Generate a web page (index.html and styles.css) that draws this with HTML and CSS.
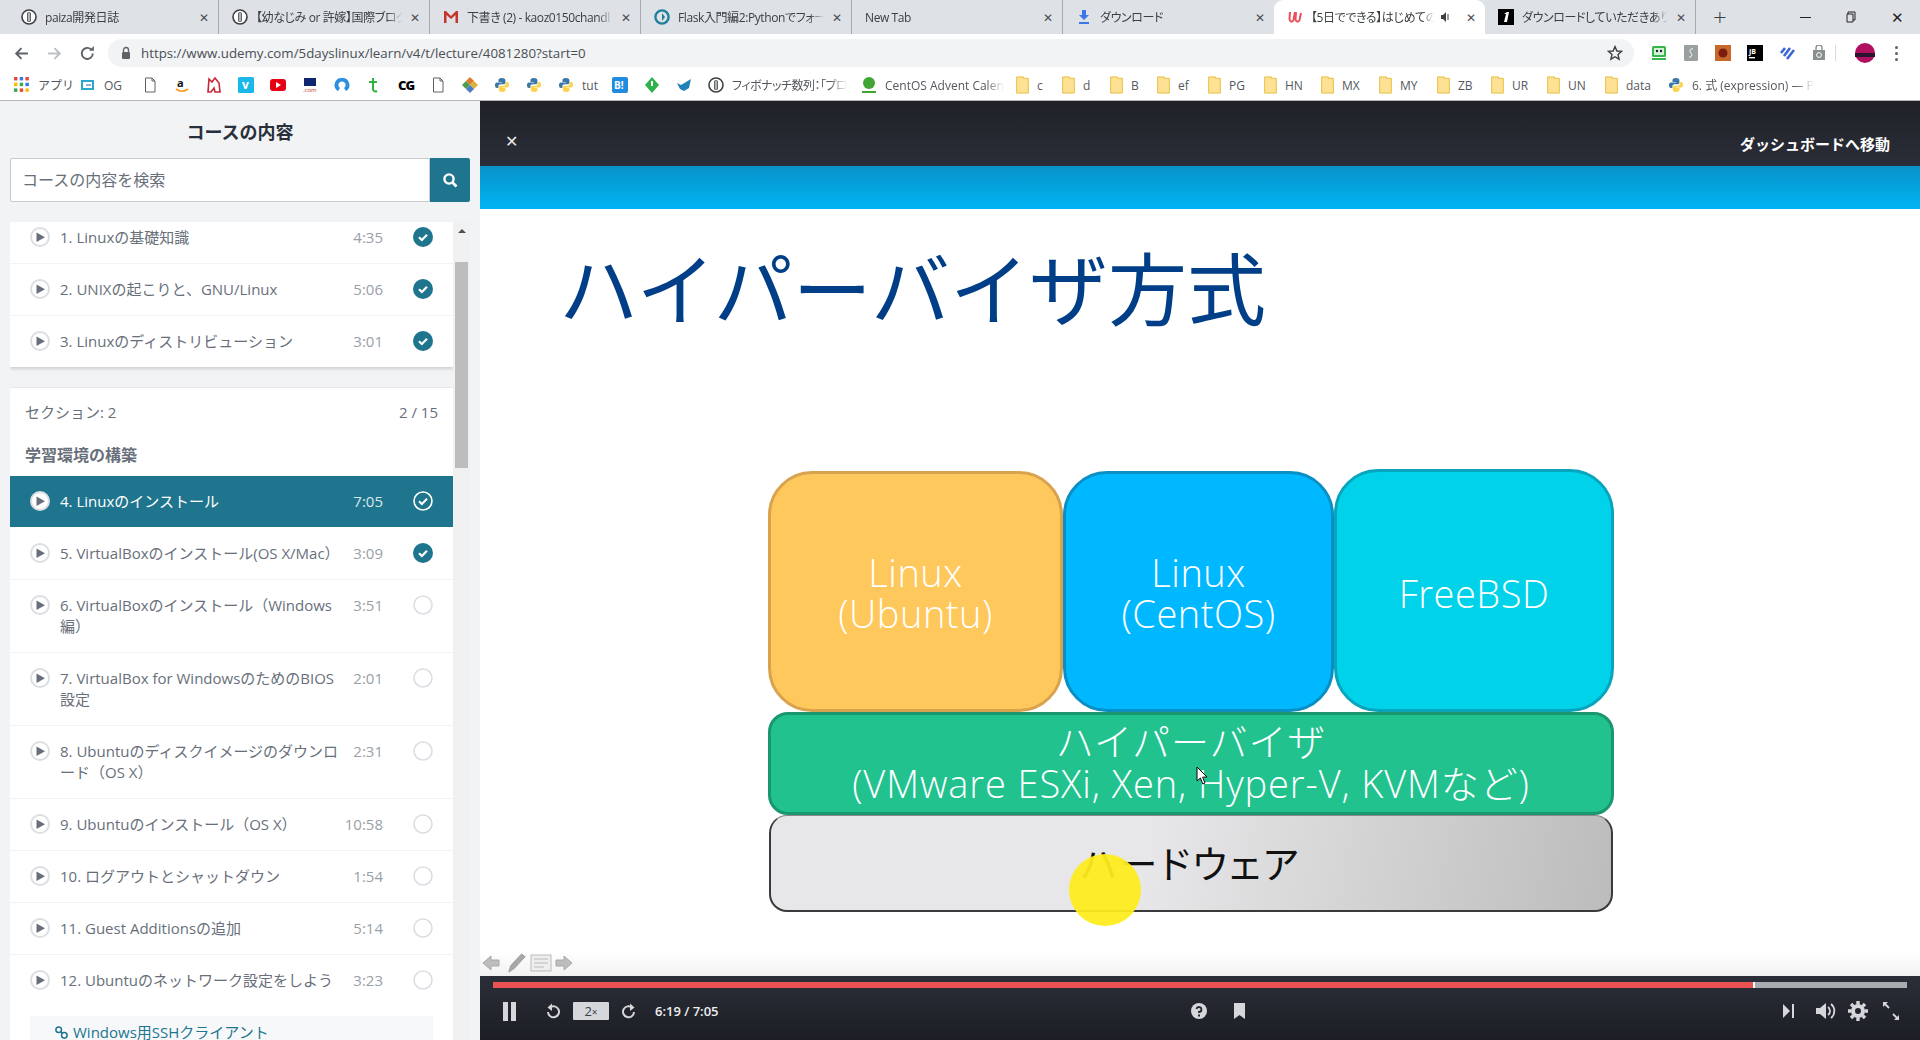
FILE: index.html
```html
<!DOCTYPE html>
<html lang="ja">
<head>
    <meta charset="UTF-8">
    <title>Udemy lecture</title>
    <link rel="stylesheet" href="styles.css">
</head>
<body>
    <svg class="defs" width="0" height="0">
        <symbol id="play" viewBox="0 0 20 20">
            <circle cx="10" cy="10" r="9" fill="#fff" stroke="#dcdee3" stroke-width="2"/>
            <path d="M6.5 5.5 L15 10.3 L6.5 15 Z" fill="#686f7a"/>
        </symbol>
        <symbol id="done" viewBox="0 0 20 20">
            <circle cx="10" cy="10" r="10" fill="#20758e"/>
            <path d="M6 10.2 L8.9 13 L14 7.8" fill="none" stroke="#fff" stroke-width="2.2"/>
        </symbol>
        <symbol id="done-w" viewBox="0 0 20 20">
            <circle cx="10" cy="10" r="9" fill="none" stroke="#fff" stroke-width="1.6"/>
            <path d="M6 10.2 L8.9 13 L14 7.8" fill="none" stroke="#fff" stroke-width="2"/>
        </symbol>
        <symbol id="todo" viewBox="0 0 20 20">
            <circle cx="10" cy="10" r="9" fill="none" stroke="#dcdee3" stroke-width="1.6"/>
        </symbol>
        <symbol id="info" viewBox="0 0 16 16">
            <circle cx="8" cy="8" r="7" fill="#fff" stroke="#3c4043" stroke-width="1.6"/>
            <rect x="6.2" y="3" width="3.6" height="10" rx="1.6" fill="#3c4043"/>
            <rect x="7.4" y="3.6" width="1.2" height="8.8" fill="#fff"/>
        </symbol>
        <symbol id="py" viewBox="0 0 16 16">
            <path d="M8 1 C5 1 4.5 2 4.5 3.2 V5 H8.2 V5.6 H3 C1.6 5.6 1 6.8 1 8.2 C1 9.8 1.6 11 3 11 H4.4 V9.2 C4.4 8 5.4 7.2 6.4 7.2 H9.8 C10.8 7.2 11.4 6.4 11.4 5.4 V3.2 C11.4 1.8 10 1 8 1 Z" fill="#3a77a8"/>
            <path d="M8 15 C11 15 11.5 14 11.5 12.8 V11 H7.8 V10.4 H13 C14.4 10.4 15 9.2 15 7.8 C15 6.2 14.4 5 13 5 H11.8 V6.8 C11.8 8 10.8 8.8 9.8 8.8 H6.4 C5.4 8.8 4.8 9.6 4.8 10.6 V12.8 C4.8 14.2 6 15 8 15 Z" fill="#fcd448"/>
        </symbol>
        <symbol id="folder" viewBox="0 0 14 20">
            <path d="M.5 1 H8 V2.5 H13.5 V19 H.5 Z" fill="#fde293" stroke="#e8b93a"/>
        </symbol>
        <symbol id="doc" viewBox="0 0 16 16">
            <path d="M3.5 1 H10 L13 4 V15 H3.5 Z M10 1 V4 H13" fill="#fff" stroke="#5f6368"/>
        </symbol>
    </svg>

    <div class="tabs">
        <div class="tab"><svg class="fav"><use href="#info"/></svg><span class="tab-name">paiza開発日誌</span><span class="tab-x">✕</span></div>
        <div class="tab"><svg class="fav"><use href="#info"/></svg><span class="tab-name">【幼なじみ or 許嫁】国際ブログ</span><span class="tab-x">✕</span></div>
        <div class="tab"><svg class="fav" viewBox="0 0 16 16"><path d="M1 14 V2 H3 L8 7 L13 2 H15 V14 H12.5 V6 L8 10 L3.5 6 V14 Z" fill="#c5352b"/></svg><span class="tab-name">下書き (2) - kaoz0150chandl</span><span class="tab-x">✕</span></div>
        <div class="tab"><svg class="fav" viewBox="0 0 16 16"><circle cx="8" cy="8" r="6.6" fill="none" stroke="#1f7f9c" stroke-width="2.4"/><path d="M8 4 L11 8 L8 12 Z" fill="#1f7f9c"/></svg><span class="tab-name">Flask入門編2:Pythonでフォー</span><span class="tab-x">✕</span></div>
        <div class="tab"><span class="tab-name">New Tab</span><span class="tab-x">✕</span></div>
        <div class="tab tab-last"><svg class="fav" viewBox="0 0 16 16"><path d="M6 1 H10 V6 H13 L8 11 L3 6 H6 Z M3 13 H13 V15 H3 Z" fill="#3b78e7"/></svg><span class="tab-name">ダウンロード</span><span class="tab-x">✕</span></div>
        <div class="tab tab-active"><svg class="fav" viewBox="0 0 16 16"><path d="M3 3 L2.5 10 C2.5 13 5.5 13.5 6.5 11 L8 3 M9 3 L8.5 10 C8.5 13 11.5 13.5 12.5 11 L14 4" fill="none" stroke="#e8505b" stroke-width="2"/></svg><span class="tab-name">【5日でできる】はじめての L</span><svg class="tab-sound" viewBox="0 0 12 12"><path d="M1 4 H3 L6 1 V11 L3 8 H1 Z" fill="#3c4043"/><path d="M8 3 V9" stroke="#3c4043"/></svg><span class="tab-x">✕</span></div>
        <div class="tab"><svg class="fav" viewBox="0 0 16 16"><rect width="16" height="16" fill="#000"/><path d="M6 13 L8 5 L6 5 L9 3 H11 L9 13 Z" fill="#fff"/></svg><span class="tab-name">ダウンロードしていただきありがと</span><span class="tab-x">✕</span></div>
        <span class="new-tab">+</span>
        <div class="win-btns">
            <span class="win-min"></span>
            <svg class="win-restore" viewBox="0 0 12 12"><path d="M3 3 V1 H10 V9 H8 M2 3 H8 V11 H2 Z" fill="none" stroke="#222"/></svg>
            <span class="win-x">✕</span>
        </div>
    </div>

    <div class="toolbar">
        <svg class="nav-ico" viewBox="0 0 16 16"><path d="M14 8 H3 M8 3 L3 8 L8 13" fill="none" stroke="#5f6368" stroke-width="1.8"/></svg>
        <svg class="nav-ico" viewBox="0 0 16 16"><path d="M2 8 H13 M8 3 L13 8 L8 13" fill="none" stroke="#bcc0c4" stroke-width="1.8"/></svg>
        <svg class="nav-ico" viewBox="0 0 16 16"><path d="M13 8 A5.2 5.2 0 1 1 11.4 4.2" fill="none" stroke="#5f6368" stroke-width="1.8"/><path d="M9.5 5.5 H14 V1 Z" fill="#5f6368"/></svg>
        <div class="omnibox">
            <svg class="lock" viewBox="0 0 10 14"><path d="M2.5 6 V4 A2.5 2.5 0 0 1 7.5 4 V6" fill="none" stroke="#5f6368" stroke-width="1.3"/><rect x="1" y="6" width="8" height="7" rx="1" fill="#5f6368"/></svg>
            <span class="url">https://www.udemy.com/5dayslinux/learn/v4/t/lecture/4081280?start=0</span>
            <svg class="star" viewBox="0 0 16 16"><path d="M8 1.6 L9.9 6 L14.6 6.4 L11 9.5 L12.1 14.2 L8 11.7 L3.9 14.2 L5 9.5 L1.4 6.4 L6.1 6 Z" fill="none" stroke="#3c4043" stroke-width="1.4"/></svg>
        </div>
        <div class="exts">
            <svg class="ext" viewBox="0 0 16 16"><rect x="1" y="1" width="14" height="11" rx="1.5" fill="#36b54a"/><rect x="3" y="3" width="10" height="7" fill="#d4f2d8"/><circle cx="6" cy="6" r="1.2" fill="#222"/><circle cx="10" cy="6" r="1.2" fill="#222"/><rect x="1" y="13" width="14" height="2" fill="#36b54a"/></svg>
            <svg class="ext" viewBox="0 0 16 16"><rect x="1" y="0" width="14" height="16" rx="1" fill="#9aa0a0"/><path d="M10 4 C7 3 6 6 8 8 C10 10 8 13 6 12" fill="none" stroke="#fff"/></svg>
            <svg class="ext" viewBox="0 0 16 16"><rect width="16" height="16" fill="#c8682a"/><circle cx="8" cy="8" r="4.5" fill="#7a1c10"/></svg>
            <svg class="ext" viewBox="0 0 16 16"><rect width="16" height="16" fill="#000"/><text x="2" y="9" class="ext-jb">JB</text><rect x="2" y="12" width="6" height="1.4" fill="#fff"/></svg>
            <svg class="ext" viewBox="0 0 16 16"><path d="M2 8 L6 3 M5 11 L11 3 M8 14 L15 5" stroke="#3b66d8" stroke-width="2.6"/></svg>
            <svg class="ext" viewBox="0 0 16 16"><path d="M2 5 H14 V15 H2 Z" fill="#8a8f90"/><path d="M5 5 V3 A3 3 0 0 1 11 3 V5" fill="none" stroke="#8a8f90" stroke-width="1.4"/><circle cx="8" cy="10" r="2.4" fill="none" stroke="#fff"/></svg>
            <span class="ext-sep"></span>
            <svg class="avatar" viewBox="0 0 20 20"><circle cx="10" cy="10" r="10" fill="#b0105f"/><path d="M0 10 H20 V14 H0 Z" fill="#2a1430"/></svg>
            <span class="kebab"><i></i><i></i><i></i></span>
        </div>
    </div>

    <div class="bookmarks">
        <div class="bm w66"><svg class="bm-ico" viewBox="0 0 14 14"><rect width="3" height="3" fill="#e8453c"/><rect x="5" width="3" height="3" fill="#3b78e7"/><rect x="10" width="3" height="3" fill="#e8453c"/><rect y="5" width="3" height="3" fill="#fbbc05"/><rect x="5" y="5" width="3" height="3" fill="#34a853"/><rect x="10" y="5" width="3" height="3" fill="#3b78e7"/><rect y="10" width="3" height="3" fill="#34a853"/><rect x="5" y="10" width="3" height="3" fill="#e8453c"/><rect x="10" y="10" width="3" height="3" fill="#fbbc05"/></svg><span>アプリ</span></div>
        <div class="bm w62"><svg class="bm-ico" viewBox="0 0 16 16"><rect x="2" y="4" width="11" height="8" fill="none" stroke="#2aa7c9" stroke-width="2"/><rect x="6" y="7" width="5" height="2" fill="#9ad"/></svg><span>OG</span></div>
        <div class="bm"><svg class="bm-ico"><use href="#doc"/></svg></div>
        <div class="bm"><svg class="bm-ico" viewBox="0 0 16 16"><text x="3" y="10" class="ico-a">a</text><path d="M2 12 C6 15 10 15 14 12" fill="none" stroke="#f49b1a" stroke-width="1.6"/></svg></div>
        <div class="bm"><svg class="bm-ico" viewBox="0 0 16 16"><path d="M3 2 L6 5 L9 1 L13 6 L14 15 H9 L8 11 L5 15 H2 Z" fill="#fff" stroke="#c62838" stroke-width="1.6"/></svg></div>
        <div class="bm"><svg class="bm-ico" viewBox="0 0 16 16"><rect width="16" height="16" rx="1.5" fill="#1ab7ea"/><text x="4" y="12" class="ico-w">v</text></svg></div>
        <div class="bm"><svg class="bm-ico" viewBox="0 0 16 16"><rect y="2" width="16" height="12" rx="3" fill="#e60012"/><path d="M6 5 L11 8 L6 11 Z" fill="#fff"/></svg></div>
        <div class="bm"><svg class="bm-ico" viewBox="0 0 16 16"><rect x="2" y="1" width="12" height="8" fill="#11276d"/><text x="1" y="15" class="ico-s">.com</text></svg></div>
        <div class="bm"><svg class="bm-ico" viewBox="0 0 16 16"><path d="M8 1 A7 7 0 0 1 12 14 L10 11 A3.6 3.6 0 1 0 6 11 L4 14 A7 7 0 0 1 8 1 Z" fill="#2d8fe0"/></svg></div>
        <div class="bm"><svg class="bm-ico" viewBox="0 0 16 16"><path d="M7 1 V12 C7 14 9 15 11 14 M3 5 H11" fill="none" stroke="#2fb23f" stroke-width="2"/></svg></div>
        <div class="bm"><span class="ico-cg">CG</span></div>
        <div class="bm"><svg class="bm-ico"><use href="#doc"/></svg></div>
        <div class="bm"><svg class="bm-ico" viewBox="0 0 16 16"><path d="M8 0 L12 4 L8 8 L4 4 Z" fill="#e2792b"/><path d="M4 4 L8 8 L4 12 L0 8 Z" fill="#4a9d4f"/><path d="M12 4 L16 8 L12 12 L8 8 Z" fill="#d9b33a"/><path d="M8 8 L12 12 L8 16 L4 12 Z" fill="#4a7dc4"/></svg></div>
        <div class="bm"><svg class="bm-ico"><use href="#py"/></svg></div>
        <div class="bm"><svg class="bm-ico"><use href="#py"/></svg></div>
        <div class="bm w54"><svg class="bm-ico"><use href="#py"/></svg><span>tut</span></div>
        <div class="bm"><svg class="bm-ico" viewBox="0 0 16 16"><rect width="16" height="16" rx="2" fill="#1f8ce0"/><text x="2" y="12" class="ico-b">B!</text></svg></div>
        <div class="bm"><svg class="bm-ico" viewBox="0 0 16 16"><path d="M8 0 L15 8 L8 16 L1 8 Z" fill="#2fb24c"/><path d="M9 4 H7 V9 H9 Z" fill="#fff"/></svg></div>
        <div class="bm"><svg class="bm-ico" viewBox="0 0 16 16"><path d="M1 6 L5 8 L15 2 L13 11 L8 14 L4 12 Z" fill="#1f83b8"/></svg></div>
        <div class="bm w153"><svg class="bm-ico"><use href="#info"/></svg><span class="clip tight">フィボナッチ数列：「プロ</span></div>
        <div class="bm w155"><svg class="bm-ico" viewBox="0 0 16 16"><circle cx="8" cy="6" r="6" fill="#3fa535"/><path d="M1 15 H15" stroke="#3fa535" stroke-width="2"/></svg><span class="clip">CentOS Advent Calen</span></div>
        <div class="bm w46"><svg class="bm-fold"><use href="#folder"/></svg><span>c</span></div>
        <div class="bm w48"><svg class="bm-fold"><use href="#folder"/></svg><span>d</span></div>
        <div class="bm w47"><svg class="bm-fold"><use href="#folder"/></svg><span>B</span></div>
        <div class="bm w51"><svg class="bm-fold"><use href="#folder"/></svg><span>ef</span></div>
        <div class="bm w56"><svg class="bm-fold"><use href="#folder"/></svg><span>PG</span></div>
        <div class="bm w57"><svg class="bm-fold"><use href="#folder"/></svg><span>HN</span></div>
        <div class="bm w58"><svg class="bm-fold"><use href="#folder"/></svg><span>MX</span></div>
        <div class="bm w58"><svg class="bm-fold"><use href="#folder"/></svg><span>MY</span></div>
        <div class="bm w54"><svg class="bm-fold"><use href="#folder"/></svg><span>ZB</span></div>
        <div class="bm w56"><svg class="bm-fold"><use href="#folder"/></svg><span>UR</span></div>
        <div class="bm w58"><svg class="bm-fold"><use href="#folder"/></svg><span>UN</span></div>
        <div class="bm w63"><svg class="bm-fold"><use href="#folder"/></svg><span>data</span></div>
        <div class="bm w153"><svg class="bm-ico"><use href="#py"/></svg><span class="clip">6. 式 (expression) — P</span></div>
    </div>

    <div class="main">
        <aside class="sidebar">
            <h2 class="side-title">コースの内容</h2>
            <div class="search">
                <div class="search-input">コースの内容を検索</div>
                <div class="search-btn"><svg viewBox="0 0 16 16"><circle cx="7" cy="7" r="4.6" fill="none" stroke="#fff" stroke-width="2.4"/><path d="M10.5 10.5 L14.5 14.5" stroke="#fff" stroke-width="2.6"/></svg></div>
            </div>
            <div class="curriculum">
                <div class="lessons">
                    <div class="group group-first">
                        <div class="row row-cut"><svg class="r-play"><use href="#play"/></svg><span class="r-name">1. Linuxの基礎知識</span><span class="r-time">4:35</span><svg class="r-state"><use href="#done"/></svg></div>
                        <div class="row"><svg class="r-play"><use href="#play"/></svg><span class="r-name">2. UNIXの起こりと、GNU/Linux</span><span class="r-time">5:06</span><svg class="r-state"><use href="#done"/></svg></div>
                        <div class="row row-end"><svg class="r-play"><use href="#play"/></svg><span class="r-name">3. Linuxのディストリビューション</span><span class="r-time">3:01</span><svg class="r-state"><use href="#done"/></svg></div>
                    </div>
                    <div class="group">
                        <div class="sec-head"><span>セクション: 2</span><span>2 / 15</span></div>
                        <h3 class="sec-title">学習環境の構築</h3>
                        <div class="row row-on"><svg class="r-play"><use href="#play"/></svg><span class="r-name">4. Linuxのインストール</span><span class="r-time">7:05</span><svg class="r-state"><use href="#done-w"/></svg></div>
                        <div class="row"><svg class="r-play"><use href="#play"/></svg><span class="r-name">5. VirtualBoxのインストール(OS X/Mac）</span><span class="r-time">3:09</span><svg class="r-state"><use href="#done"/></svg></div>
                        <div class="row"><svg class="r-play"><use href="#play"/></svg><span class="r-name">6. VirtualBoxのインストール（Windows編）</span><span class="r-time">3:51</span><svg class="r-state"><use href="#todo"/></svg></div>
                        <div class="row"><svg class="r-play"><use href="#play"/></svg><span class="r-name">7. VirtualBox for WindowsのためのBIOS設定</span><span class="r-time">2:01</span><svg class="r-state"><use href="#todo"/></svg></div>
                        <div class="row"><svg class="r-play"><use href="#play"/></svg><span class="r-name">8. Ubuntuのディスクイメージのダウンロード（OS X）</span><span class="r-time">2:31</span><svg class="r-state"><use href="#todo"/></svg></div>
                        <div class="row"><svg class="r-play"><use href="#play"/></svg><span class="r-name">9. Ubuntuのインストール（OS X）</span><span class="r-time">10:58</span><svg class="r-state"><use href="#todo"/></svg></div>
                        <div class="row"><svg class="r-play"><use href="#play"/></svg><span class="r-name">10. ログアウトとシャットダウン</span><span class="r-time">1:54</span><svg class="r-state"><use href="#todo"/></svg></div>
                        <div class="row"><svg class="r-play"><use href="#play"/></svg><span class="r-name">11. Guest Additionsの追加</span><span class="r-time">5:14</span><svg class="r-state"><use href="#todo"/></svg></div>
                        <div class="row row-plain"><svg class="r-play"><use href="#play"/></svg><span class="r-name">12. Ubuntuのネットワーク設定をしよう</span><span class="r-time">3:23</span><svg class="r-state"><use href="#todo"/></svg></div>
                        <div class="res-link"><svg viewBox="0 0 16 16"><circle cx="5" cy="5" r="3" fill="none" stroke="#20758e" stroke-width="1.6"/><circle cx="11" cy="11" r="3" fill="none" stroke="#20758e" stroke-width="1.6"/><path d="M7 7 L9 9" stroke="#20758e" stroke-width="1.6"/></svg><span>Windows用SSHクライアント</span></div>
                    </div>
                </div>
                <div class="scrollbar">
                    <span class="sb-up"></span>
                    <span class="sb-thumb"></span>
                </div>
            </div>
        </aside>

        <section class="player">
            <div class="topbar">
                <span class="close">✕</span>
                <span class="dash">ダッシュボードへ移動</span>
            </div>
            <div class="slide">
                <div class="band"></div>
                <h1 class="slide-title">ハイパーバイザ方式</h1>
                <div class="diagram">
                    <div class="os-row">
                        <div class="box ubuntu">Linux<br>(Ubuntu)</div>
                        <div class="box centos">Linux<br>(CentOS)</div>
                        <div class="box bsd">FreeBSD</div>
                    </div>
                    <div class="hyper">ハイパーバイザ<br>(VMware ESXi, Xen, Hyper-V, KVMなど)</div>
                    <div class="hard">ハードウェア</div>
                    <span class="spot"></span>
                    <svg class="pointer" viewBox="0 0 12 19"><path d="M1 1 V15 L4.4 12 L6.8 18 L9 17 L6.6 11.2 L11 11 Z" fill="#fff" stroke="#000"/></svg>
                </div>
                <div class="slide-nav">
                    <svg viewBox="0 0 18 18" class="sn"><path d="M9 2 L1 9 L9 16 V12 H17 V6 H9 Z" fill="#bdbdbd" stroke="#a8a8a8"/></svg>
                    <svg viewBox="0 0 20 22" class="sn sn-pen"><path d="M15 1 L19 4 L7 17 L1 21 L3 14 Z" fill="#a8a8a8" stroke="#999"/></svg>
                    <svg viewBox="0 0 22 18" class="sn sn-list"><rect x="1" y="1" width="20" height="16" fill="#eee" stroke="#bbb"/><path d="M4 5 H18 M4 9 H18 M4 13 H14" stroke="#bbb"/></svg>
                    <svg viewBox="0 0 18 18" class="sn"><path d="M9 2 L17 9 L9 16 V12 H1 V6 H9 Z" fill="#bdbdbd" stroke="#a8a8a8"/></svg>
                </div>
            </div>
            <div class="controls">
                <div class="progress"><span class="prog-done"></span><span class="prog-head"></span></div>
                <div class="ctrl-row">
                    <div class="ctrl-left">
                        <svg class="c-pause" viewBox="0 0 13 19"><rect width="5" height="19" fill="#d6d7da"/><rect x="8" width="5" height="19" fill="#d6d7da"/></svg>
                        <svg class="c-ico c-back" viewBox="0 0 16 16"><path d="M5 4.5 A5.5 5.5 0 1 1 3 9" fill="none" stroke="#d6d7da" stroke-width="2"/><path d="M7 0.5 V8 L2.5 4.5 Z" fill="#d6d7da"/></svg>
                        <span class="speed">2<small>×</small></span>
                        <svg class="c-ico" viewBox="0 0 16 16"><path d="M11 4.5 A5.5 5.5 0 1 0 13 9" fill="none" stroke="#d6d7da" stroke-width="2"/><path d="M9 0.5 V8 L13.5 4.5 Z" fill="#d6d7da"/></svg>
                        <span class="time">6:19 / 7:05</span>
                    </div>
                    <div class="ctrl-mid">
                        <svg class="c-ico" viewBox="0 0 16 16"><circle cx="8" cy="8" r="8" fill="#d6d7da"/><path d="M5.5 6 A2.5 2.5 0 1 1 8 9 V10" fill="none" stroke="#24272f" stroke-width="1.8"/><rect x="7" y="11.5" width="2" height="2" fill="#24272f"/></svg>
                        <svg class="c-mark" viewBox="0 0 11 16"><path d="M0 0 H11 V16 L5.5 12 L0 16 Z" fill="#d6d7da"/></svg>
                    </div>
                    <div class="ctrl-right">
                        <svg class="c-next" viewBox="0 0 11 14"><path d="M0 0 L7 7 L0 14 Z" fill="#d6d7da"/><rect x="9" width="2" height="14" fill="#d6d7da"/></svg>
                        <svg class="c-vol" viewBox="0 0 20 20"><path d="M0 7 H4 L10 2 V18 L4 13 H0 Z" fill="#d6d7da"/><path d="M12 6 A5 5 0 0 1 12 14 M15 3 A9 9 0 0 1 15 17" fill="none" stroke="#d6d7da" stroke-width="1.8"/></svg>
                        <svg class="c-gear" viewBox="0 0 20 20"><circle cx="10" cy="10" r="5" fill="none" stroke="#d6d7da" stroke-width="4"/><path d="M10 0 V20 M0 10 H20 M3 3 L17 17 M17 3 L3 17" stroke="#d6d7da" stroke-width="3.4" stroke-dasharray="3.4 13.2 3.4"/></svg>
                        <svg class="c-full" viewBox="0 0 18 20"><path d="M1 1 H6 L1 6 Z M17 19 H12 L17 14 Z" fill="#d6d7da"/><path d="M2 2 L7 7 M16 18 L11 13" stroke="#d6d7da" stroke-width="1.8"/></svg>
                    </div>
                </div>
            </div>
        </section>
    </div>
</body>
</html>
```

FILE: styles.css
```css
* {
    box-sizing: border-box;
}
html, body {
    margin: 0;
    height: 100%;
    overflow: hidden;
}
body {
    display: flex;
    flex-direction: column;
    height: 1040px;
    font-family: "Open Sans", "Noto Sans CJK JP", sans-serif;
    color: #29303b;
    background: #fff;
}
.defs {
    position: absolute;
}

/* browser tabs */
.tabs {
    flex: none;
    display: flex;
    align-items: center;
    height: 34px;
    padding-left: 8px;
    background: #dee1e6;
    font-size: 12px;
    color: #3c4043;
}
.tab {
    flex: none;
    display: flex;
    align-items: center;
    width: 211px;
    height: 34px;
    padding: 0 7px 0 13px;
    border-right: 1px solid #a6a9ad;
    white-space: nowrap;
}
.tab-last {
    border-right: none;
}
.tab-active {
    height: 34px;
    background: #fff;
    border-right: none;
    border-radius: 9px 9px 0 0;
}
.fav {
    flex: none;
    width: 16px;
    height: 16px;
    margin-right: 8px;
}
.tab-name {
    flex: 1;
    min-width: 0;
    overflow: hidden;
    font-feature-settings: "palt";
    letter-spacing: -0.4px;
    -webkit-mask-image: linear-gradient(to right, #000 90%, transparent);
    mask-image: linear-gradient(to right, #000 90%, transparent);
}
.tab-sound {
    flex: none;
    width: 12px;
    height: 12px;
    margin: 0 6px;
}
.tab-x {
    flex: none;
    width: 14px;
    margin-left: 6px;
    font-size: 12px;
    text-align: center;
    color: #4a4d52;
}
.new-tab {
    margin-left: 17px;
    font-size: 24px;
    font-weight: 300;
    line-height: 1;
    color: #3c4043;
}
.win-btns {
    display: flex;
    align-items: center;
    gap: 34px;
    margin-left: auto;
    padding-right: 16px;
}
.win-min {
    width: 11px;
    height: 1px;
    background: #222;
}
.win-restore {
    width: 12px;
    height: 12px;
}
.win-x {
    font-size: 15px;
    color: #222;
}

/* address bar */
.toolbar {
    flex: none;
    display: flex;
    align-items: center;
    height: 36px;
    padding: 2px 6px 0 13px;
}
.nav-ico {
    flex: none;
    width: 17px;
    height: 17px;
    margin-right: 16px;
}
.omnibox {
    flex: none;
    display: flex;
    align-items: center;
    width: 1526px;
    height: 28px;
    margin-left: -4px;
    padding: 0 11px 0 13px;
    border-radius: 14px;
    background: #f1f3f4;
}
.lock {
    width: 10px;
    height: 14px;
    margin-right: 10px;
}
.url {
    flex: 1;
    font-size: 13.3px;
    color: #4b4f54;
}
.star {
    width: 16px;
    height: 16px;
}
.exts {
    display: flex;
    align-items: center;
    margin-left: 17px;
}
.ext {
    flex: none;
    width: 16px;
    height: 16px;
    margin-right: 16px;
}
.ext-jb {
    font-size: 7px;
    font-weight: 700;
    fill: #fff;
}
.ext-sep {
    width: 1px;
    height: 16px;
    margin: 0 19px 0 -8px;
    background: #dadce0;
}
.avatar {
    width: 20px;
    height: 20px;
    margin-right: 20px;
}
.kebab {
    display: flex;
    flex-direction: column;
    gap: 3px;
}
.kebab i {
    width: 3px;
    height: 3px;
    border-radius: 50%;
    background: #5f6368;
}

/* bookmarks */
.bookmarks {
    flex: none;
    display: flex;
    align-items: center;
    height: 31px;
    padding-left: 14px;
    border-bottom: 1px solid #b4b6b9;
    font-size: 12px;
    color: #54585d;
    white-space: nowrap;
}
.bm {
    flex: none;
    display: flex;
    align-items: center;
    gap: 8px;
    width: 32px;
    overflow: hidden;
}
.bm-ico {
    flex: none;
    width: 16px;
    height: 16px;
}
.bm-fold {
    flex: none;
    width: 13px;
    height: 18px;
}
.w46 { width: 46px; }
.w47 { width: 47px; }
.w48 { width: 48px; }
.w51 { width: 51px; }
.w54 { width: 54px; }
.w56 { width: 56px; }
.w57 { width: 57px; }
.w58 { width: 58px; }
.w62 { width: 62px; }
.w63 { width: 63px; }
.w66 { width: 66px; }
.w153 { width: 153px; }
.w155 { width: 155px; }
.clip {
    -webkit-mask-image: linear-gradient(to right, #000 85%, transparent);
    mask-image: linear-gradient(to right, #000 85%, transparent);
}
.tight {
    font-feature-settings: "palt";
    letter-spacing: -0.5px;
}
.ico-a {
    font-size: 11px;
    font-weight: 700;
    fill: #111;
}
.ico-w {
    font-size: 12px;
    font-weight: 700;
    fill: #fff;
}
.ico-s {
    font-size: 6px;
    fill: #c8342a;
}
.ico-b {
    font-size: 10px;
    font-weight: 700;
    fill: #fff;
}
.ico-cg {
    font-size: 13px;
    font-weight: 800;
    color: #000;
    letter-spacing: -1px;
}

.main {
    flex: 1;
    display: flex;
    min-height: 0;
}

/* course sidebar */
.sidebar {
    flex: none;
    display: flex;
    flex-direction: column;
    width: 480px;
    padding: 0 10px;
    background: #f2f3f5;
}
.side-title {
    margin: 18px 0 13px;
    font-size: 18px;
    line-height: 26px;
    font-weight: 700;
    text-align: center;
    color: #29303b;
}
.search {
    flex: none;
    display: flex;
    height: 44px;
    margin-bottom: 20px;
}
.search-input {
    flex: 1;
    padding-left: 11px;
    line-height: 42px;
    font-size: 16px;
    color: #686f7a;
    background: #fff;
    border: 1px solid #cacbcc;
    border-radius: 2px 0 0 2px;
}
.search-btn {
    display: flex;
    align-items: center;
    justify-content: center;
    width: 40px;
    background: #20758e;
    border-radius: 0 2px 2px 0;
}
.search-btn svg {
    width: 16px;
    height: 16px;
}
.curriculum {
    flex: 1;
    display: flex;
    min-height: 0;
    overflow: hidden;
}
.lessons {
    flex: none;
    width: 443px;
}
.group {
    background: #fff;
    border-top: 1px solid #e6e7ea;
}
.group-first {
    margin-bottom: 20px;
    border-top: none;
    box-shadow: 0 2px 3px rgba(0, 0, 0, 0.15);
}
.row {
    display: flex;
    align-items: flex-start;
    padding: 15px 20px;
    border-bottom: 1px solid #f2f3f5;
    font-size: 15px;
    line-height: 21px;
    color: #686f7a;
}
.row-cut {
    padding-top: 5px;
}
.row-end, .row-plain {
    border-bottom: none;
}
.row-on {
    margin-bottom: 1px;
    background: #20758e;
    color: #fff;
    border-bottom: none;
}
.r-play, .r-state {
    flex: none;
    width: 20px;
    height: 20px;
}
.r-name {
    flex: none;
    width: 280px;
    margin-left: 10px;
}
.r-time {
    flex: none;
    width: 43px;
    text-align: right;
    color: #9aa0a8;
    white-space: nowrap;
}
.row-on .r-time {
    color: #d9e6ea;
}
.r-state {
    margin-left: 30px;
}
.sec-head {
    display: flex;
    justify-content: space-between;
    padding: 14px 15px 0;
    font-size: 15px;
    line-height: 21px;
    color: #686f7a;
}
.sec-title {
    margin: 21px 15px 10px;
    font-size: 16px;
    line-height: 22px;
    font-weight: 700;
    color: #686f7a;
}
.res-link {
    display: flex;
    align-items: center;
    gap: 4px;
    margin: 10px 20px 0;
    padding: 6px 24px;
    font-size: 15px;
    line-height: 21px;
    color: #20758e;
    background: #f7f8fa;
}
.res-link svg {
    width: 15px;
    height: 15px;
}
.scrollbar {
    position: relative;
    flex: none;
    width: 17px;
    background: #f1f1f1;
}
.sb-up {
    position: absolute;
    top: 7px;
    left: 5px;
    border: 4px solid transparent;
    border-top: none;
    border-bottom: 4px solid #505050;
}
.sb-thumb {
    position: absolute;
    top: 40px;
    left: 2px;
    width: 13px;
    height: 206px;
    background: #bdbdbd;
}

/* video player */
.player {
    flex: 1;
    display: flex;
    flex-direction: column;
    min-width: 0;
}
.topbar {
    flex: none;
    display: flex;
    align-items: center;
    justify-content: space-between;
    height: 65px;
    padding: 19px 30px 0 25px;
    background: linear-gradient(#1f2127, #2b2e38);
    color: #fff;
}
.close {
    margin-top: -5px;
    font-size: 16px;
    color: #e8e8e8;
}
.dash {
    font-size: 15px;
    font-weight: 700;
}
.slide {
    position: relative;
    flex: 1;
    display: flex;
    flex-direction: column;
    min-height: 0;
    background: linear-gradient(#fff 97%, #f1f1f1);
}
.band {
    flex: none;
    height: 43px;
    background: linear-gradient(#0892c8, #00b4f5);
}
.slide-title {
    margin: 36px 0 0 79px;
    font-size: 79px;
    line-height: 90px;
    font-weight: 400;
    color: #003f87;
}
.diagram {
    position: relative;
    width: 846px;
    margin: 134px 0 0 288px;
    color: #fff;
    font-size: 38px;
    font-weight: 300;
    text-align: center;
}
.os-row {
    display: grid;
    grid-template-columns: 295px 271px 280px;
    height: 243px;
    line-height: 41px;
    letter-spacing: 0.5px;
}
.box {
    display: flex;
    align-items: center;
    justify-content: center;
    padding-top: 2px;
    border-style: solid;
    border-width: 3px;
    border-radius: 44px;
}
.ubuntu {
    margin-top: 2px;
    background: #ffc85c;
    border-color: #d9a34e;
}
.centos {
    margin-top: 2px;
    background: #00b8ff;
    border-color: #0a8fc4;
}
.bsd {
    padding-top: 5px;
    background: #00d2ea;
    border-color: #07a5bd;
}
.hyper {
    height: 103px;
    padding-top: 5px;
    line-height: 42px;
    letter-spacing: 0.9px;
    background: #22c28f;
    border: 3px solid #1a9670;
    border-radius: 20px;
}
.hard {
    height: 97px;
    margin: 0 1px;
    padding-top: 2px;
    line-height: 90px;
    font-weight: 400;
    color: #111;
    font-feature-settings: "palt";
    letter-spacing: 2.6px;
    background: linear-gradient(100deg, #e7e7e9 45%, #bcbcbc);
    border: 2px solid #3a3a3a;
    border-top: 1px solid #8a8a8a;
    border-radius: 18px;
}
.spot {
    position: absolute;
    left: 301px;
    top: 385px;
    width: 72px;
    height: 72px;
    border-radius: 50%;
    background: rgba(253, 236, 30, 0.94);
}
.pointer {
    position: absolute;
    left: 428px;
    top: 297px;
    width: 12px;
    height: 19px;
}
.slide-nav {
    display: flex;
    align-items: center;
    gap: 3px;
    margin-top: auto;
    padding: 0 0 3px 2px;
}
.sn {
    width: 18px;
    height: 18px;
}
.sn-pen {
    width: 20px;
    height: 20px;
    margin-left: 4px;
}
.sn-list {
    width: 22px;
}
.controls {
    flex: none;
    height: 64px;
    padding-top: 6px;
    background: linear-gradient(#2b2e38, #1c1e24);
}
.progress {
    display: flex;
    height: 6px;
    margin: 0 13px 0 13px;
    background: #a8abb0;
}
.prog-done {
    width: 1260px;
    background: #ec5252;
}
.prog-head {
    width: 2px;
    background: #fff;
}
.ctrl-row {
    display: flex;
    align-items: center;
    height: 46px;
}
.ctrl-left {
    display: flex;
    align-items: center;
    width: 700px;
    padding-left: 23px;
}
.c-pause {
    width: 13px;
    height: 19px;
    margin-right: 29px;
}
.c-ico {
    flex: none;
    width: 16px;
    height: 16px;
}
.c-back {
    margin-right: 12px;
}
.speed {
    width: 36px;
    height: 18px;
    margin-right: 12px;
    border-radius: 1px;
    background: #d6d7da;
    color: #3c3f47;
    font-size: 13px;
    line-height: 18px;
    text-align: center;
}
.speed small {
    font-size: 10px;
}
.time {
    margin-left: 18px;
    font-size: 13px;
    font-weight: 600;
    color: #eee;
}
.ctrl-mid {
    display: flex;
    align-items: center;
    gap: 27px;
    margin-left: 11px;
}
.c-mark {
    width: 11px;
    height: 16px;
}
.ctrl-right {
    display: flex;
    align-items: center;
    margin-left: auto;
    padding-right: 20px;
}
.c-next {
    width: 11px;
    height: 14px;
    margin-right: 22px;
}
.c-vol {
    width: 20px;
    height: 20px;
    margin-right: 12px;
}
.c-gear {
    width: 20px;
    height: 20px;
    margin-right: 14px;
}
.c-full {
    width: 18px;
    height: 20px;
}
```
